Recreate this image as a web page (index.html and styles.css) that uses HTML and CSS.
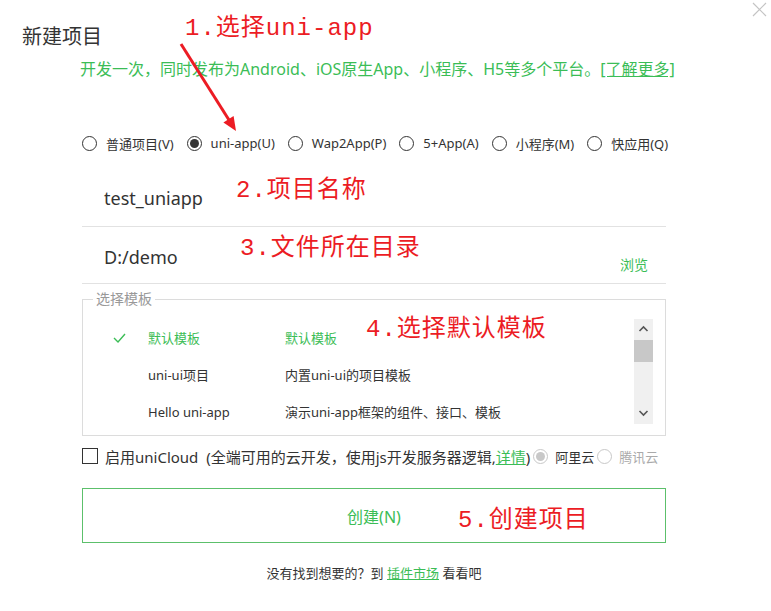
FILE: index.html
```html
<!DOCTYPE html>
<html lang="zh-CN">
<head>
<meta charset="utf-8">
<title>新建项目</title>
<link rel="stylesheet" href="styles.css">
</head>
<body>
<div class="dialog">
  <h1 class="title">新建项目</h1>
  <p class="subtitle">开发一次，同时发布为Android、iOS原生App、小程序、H5等多个平台。<a class="link">[了解更多]</a></p>

  <div class="content">
    <div class="types">
      <label class="type"><span class="radio"></span>普通项目(V)</label>
      <label class="type"><span class="radio checked"></span>uni-app(U)</label>
      <label class="type"><span class="radio"></span>Wap2App(P)</label>
      <label class="type"><span class="radio"></span>5+App(A)</label>
      <label class="type"><span class="radio"></span>小程序(M)</label>
      <label class="type"><span class="radio"></span>快应用(Q)</label>
    </div>

    <div class="field">
      <span class="field-value">test_uniapp</span>
    </div>
    <div class="field">
      <span class="field-value">D:/demo</span>
      <span class="browse">浏览</span>
    </div>

    <fieldset class="templates">
      <legend class="legend">选择模板</legend>
      <div class="tpl-body">
        <div class="tpl-list">
          <div class="tpl-row active">
            <span class="tpl-check"><svg width="13" height="10" viewBox="0 0 13 10"><polyline points="1,5 5,9 12,1" fill="none" stroke="#3bbd56" stroke-width="1.4"/></svg></span>
            <span class="tpl-name">默认模板</span>
            <span class="tpl-desc">默认模板</span>
          </div>
          <div class="tpl-row">
            <span class="tpl-check"></span>
            <span class="tpl-name">uni-ui项目</span>
            <span class="tpl-desc">内置uni-ui的项目模板</span>
          </div>
          <div class="tpl-row">
            <span class="tpl-check"></span>
            <span class="tpl-name">Hello uni-app</span>
            <span class="tpl-desc">演示uni-app框架的组件、接口、模板</span>
          </div>
        </div>
        <div class="scrollbar">
          <svg class="arrow" width="19" height="14" viewBox="0 0 19 14"><polyline points="5.5,9 9.5,5 13.5,9" fill="none" stroke="#555" stroke-width="1.6"/></svg>
          <div class="thumb"></div>
          <div class="track"></div>
          <svg class="arrow" width="19" height="14" viewBox="0 0 19 14"><polyline points="5.5,5 9.5,9 13.5,5" fill="none" stroke="#555" stroke-width="1.6"/></svg>
        </div>
      </div>
    </fieldset>

    <div class="cloud">
      <span class="checkbox"></span>
      <span class="cloud-text">启用uniCloud&nbsp;&nbsp;(全端可用的云开发，使用js开发服务器逻辑,<a class="link">详情</a>)</span>
      <span class="radio small disabled-checked"></span><span class="provider">阿里云</span>
      <span class="radio small disabled"></span><span class="provider muted">腾讯云</span>
    </div>

    <button class="create">创建(N)</button>

    <p class="footer">没有找到想要的？到 <a class="link">插件市场</a> 看看吧</p>
  </div>

  <span class="close"><svg width="15" height="15" viewBox="0 0 15 15"><path d="M1 1 L14 14 M14 1 L1 14" stroke="#c4c4c4" stroke-width="1.2" fill="none"/></svg></span>

  <svg class="arrow-note" width="771" height="611" viewBox="0 0 771 611">
    <line x1="181" y1="44" x2="229" y2="120" stroke="#ec1c24" stroke-width="3"/>
    <polygon points="236,131 223.4,122.4 233.6,116" fill="#ec1c24"/>
  </svg>
  <span class="note note1">1.选择uni-app</span>
  <span class="note note2">2.项目名称</span>
  <span class="note note3">3.文件所在目录</span>
  <span class="note note4">4.选择默认模板</span>
  <span class="note note5">5.创建项目</span>
</div>
</body>
</html>
```

FILE: styles.css
```css
* { box-sizing: border-box; }
body {
  margin: 0;
  background: #fff;
  font-family: "Noto Sans", "Noto Sans CJK SC", sans-serif;
  color: #333;
}
.dialog {
  position: relative;
  width: 771px;
  height: 611px;
  background: #fff;
  overflow: hidden;
}
.title {
  margin: 0;
  padding: 25px 0 0 22px;
  font-size: 20px;
  line-height: 24px;
  font-weight: normal;
  color: #333;
}
.subtitle {
  margin: 10px 0 0 80px;
  font-size: 16px;
  line-height: 20px;
  color: #3bbd56;
  white-space: nowrap;
}
.link {
  color: #3bbd56;
  text-decoration: underline;
}
.content {
  margin-left: 82px;
  width: 584px;
}
.types {
  margin-top: 54px;
  display: flex;
  align-items: center;
  gap: 13px;
  height: 20px;
  font-size: 13px;
  color: #333;
}
.type {
  display: flex;
  align-items: center;
  gap: 9px;
  white-space: nowrap;
}
.radio {
  width: 15px;
  height: 15px;
  border: 1px solid #333;
  border-radius: 50%;
  display: inline-flex;
  align-items: center;
  justify-content: center;
  flex: none;
}
.radio.checked::after {
  content: "";
  width: 9px;
  height: 9px;
  border-radius: 50%;
  background: #333;
}
.field {
  height: 57px;
  border-bottom: 1px solid #e2e2e2;
  display: flex;
  align-items: center;
  justify-content: space-between;
  padding: 0 18px 0 22px;
}
.types + .field { margin-top: 17px; }
.field + .field .field-value { margin-top: 4px; }
.field-value {
  font-size: 18px;
  line-height: 24px;
  color: #333;
}
.browse {
  font-size: 14px;
  color: #3bbd56;
  align-self: flex-end;
  margin-bottom: 9px;
}
.templates {
  margin: 5px 0 0 0;
  padding: 0 12px 11px 0;
  border: 1px solid #dcdcdc;
  min-width: 0;
}
.legend {
  margin-left: 10px;
  padding: 0 3px;
  font-size: 14px;
  line-height: 20px;
  color: #999;
}
.tpl-body {
  margin-top: 10px;
  display: flex;
}
.tpl-list {
  flex: 1;
  height: 105px;
  overflow: hidden;
}
.tpl-row {
  height: 37px;
  display: flex;
  align-items: center;
  padding-left: 30px;
  font-size: 13px;
  color: #333;
}
.tpl-row.active { color: #3bbd56; }
.tpl-check {
  width: 35px;
  display: flex;
  align-items: center;
}
.tpl-name { width: 137px; }
.scrollbar {
  width: 19px;
  height: 105px;
  background: #f0f0f0;
  display: flex;
  flex-direction: column;
}
.scrollbar .arrow { display: block; flex: none; margin-top: 3px; }
.scrollbar .arrow:last-child { margin-top: 0; margin-bottom: 4px; }
.thumb {
  height: 22px;
  background: #c8c8c8;
  margin-top: 4px;
}
.track { flex: 1; }
.cloud {
  margin-top: 10px;
  height: 20px;
  display: flex;
  align-items: center;
  font-size: 15px;
  white-space: nowrap;
}
.checkbox {
  width: 16px;
  height: 16px;
  border: 1px solid #333;
  flex: none;
  margin-right: 7px;
}
.cloud-text { color: #333; }
.radio.small {
  width: 15px;
  height: 15px;
  border-color: #c8c8c8;
  margin: 0 7px 0 3px;
}
.radio.disabled-checked::after {
  content: "";
  width: 9px;
  height: 9px;
  border-radius: 50%;
  background: #c8c8c8;
}
.provider { color: #333; font-size: 13px; }
.provider.muted { color: #aaa; }
.create {
  display: block;
  width: 584px;
  height: 55px;
  margin-top: 22px;
  background: #fff;
  border: 1px solid #5cc06b;
  font-family: inherit;
  font-size: 16px;
  color: #3bbd56;
  padding: 0;
}
.footer {
  margin: 20px 0 0;
  text-align: center;
  font-size: 13px;
  line-height: 20px;
  color: #333;
}
.close {
  position: absolute;
  top: 2px;
  right: 4px;
  display: block;
}
.close svg { display: block; }
.arrow-note {
  position: absolute;
  left: 0;
  top: 0;
  pointer-events: none;
}
.note {
  position: absolute;
  font-family: "Liberation Mono", "Noto Sans CJK SC", monospace;
  font-size: 24px;
  line-height: 24px;
  color: #ec1c24;
  white-space: nowrap;
  letter-spacing: 1px;
}
.note1 { left: 185px; top: 17px; }
.note2 { left: 236px; top: 179px; }
.note3 { left: 240px; top: 237px; }
.note4 { left: 366px; top: 318px; }
.note5 { left: 458px; top: 509px; }
```
